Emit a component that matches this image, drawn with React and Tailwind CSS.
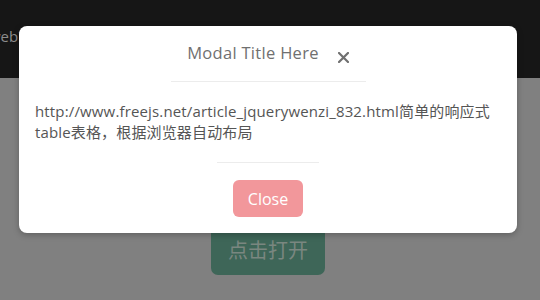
export default function App() {
  return (
    <div className="relative h-[300px] w-[540px] overflow-hidden bg-[#808080] font-['Open_Sans','Noto_Sans_CJK_SC',sans-serif]">
      <header className="flex h-[78px] items-start bg-[#161616] pt-[25px]">
        <span className="-ml-[11px] text-[15px] text-[#8c8c8c]">web前端开发</span>
      </header>

      <div className="flex justify-center pt-[125px] pr-[4px]">
        <button
          type="button"
          className="h-[72px] w-[114px] rounded-[7px] bg-[#3e6658] pt-[24px] text-[20px] text-[#7a8780]"
        >
          点击打开
        </button>
      </div>

      <div className="absolute left-[19px] top-[26px] w-[498px] rounded-[8px] bg-white pb-[16px] shadow-[0_2px_6px_rgba(0,0,0,0.25)]">
        <div className="flex flex-col items-center">
          <div className="flex h-[55px] items-center">
            <h3 className="text-[16.5px] tracking-[0.3px] text-[#707070]">Modal Title Here</h3>
            <svg className="ml-[19px] mt-[7px]" width="11" height="11" viewBox="0 0 11 11">
              <path d="M1 1L10 10M10 1L1 10" stroke="#707070" strokeWidth="2.2" strokeLinecap="square" />
            </svg>
          </div>
          <div className="h-px w-[195px] bg-[#ececec]" />
        </div>
        <p className="px-[16px] pt-[19px] text-[15px] leading-[21px] tracking-[0.15px] text-[#555]">
          http://www.freejs.net/article_jquerywenzi_832.html简单的响应式table表格，根据浏览器自动布局
        </p>
        <div className="mt-[19px] flex flex-col items-center">
          <div className="h-px w-[102px] bg-[#ececec]" />
          <button
            type="button"
            className="mt-[17px] h-[37px] w-[70px] rounded-[6px] bg-[#f2979b] text-[16px] text-white"
          >
            Close
          </button>
        </div>
      </div>
    </div>
  )
}
